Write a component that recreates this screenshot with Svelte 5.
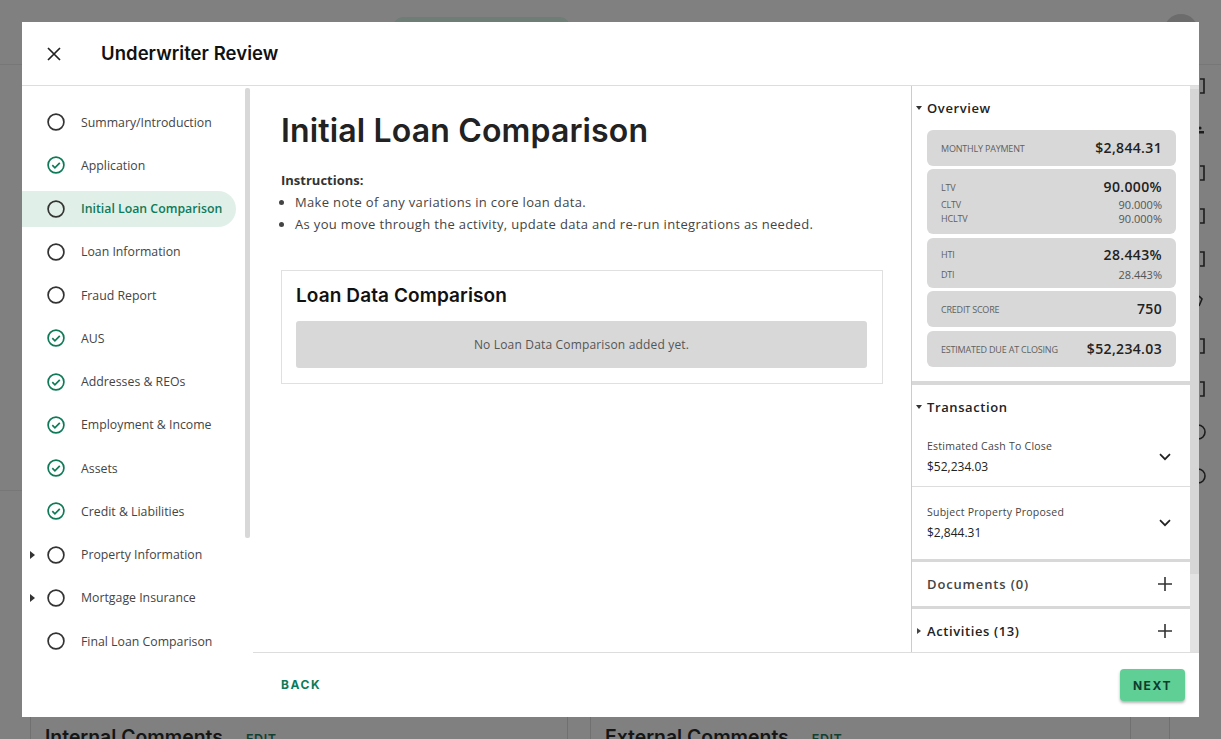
<script>
  const steps = [
    { name: 'Summary/Introduction' },
    { name: 'Application', done: true },
    { name: 'Initial Loan Comparison', active: true },
    { name: 'Loan Information' },
    { name: 'Fraud Report' },
    { name: 'AUS', done: true },
    { name: 'Addresses & REOs', done: true },
    { name: 'Employment & Income', done: true },
    { name: 'Assets', done: true },
    { name: 'Credit & Liabilities', done: true },
    { name: 'Property Information', expand: true },
    { name: 'Mortgage Insurance', expand: true },
    { name: 'Final Loan Comparison' }
  ];

  const rail = ['box', 'people', 'box', 'box', 'box', 'tag', 'box', 'box', 'round', 'round'];

  const costs = [
    { label: 'Estimated Cash To Close', value: '$52,234.03' },
    { label: 'Subject Property Proposed', value: '$2,844.31' }
  ];
</script>

<div class="page">
  <div class="topbar">
    <div class="pill"></div>
    <div class="avatar"></div>
  </div>
  <div class="under">
    <div class="under-main">
      <div class="upper"></div>
      <div class="comments">
        <div class="comment-card"><h3>Internal Comments</h3><span>EDIT</span></div>
        <div class="comment-card ext"><h3>External Comments</h3><span>EDIT</span></div>
        <div class="comment-side"></div>
      </div>
    </div>
    <div class="rail">
      {#each rail as r}
        <svg width="18" height="18" viewBox="0 0 18 18" fill="none" stroke="#1c1c1c" stroke-width="1.6">
          {#if r === 'round'}
            <circle cx="8" cy="9" r="7" />
          {:else if r === 'people'}
            <circle cx="10" cy="8" r="1.6" fill="#1c1c1c" stroke="none" />
            <rect x="8" y="11" width="6" height="2.5" fill="#1c1c1c" stroke="none" />
          {:else if r === 'tag'}
            <path d="M9 3l3 3-3 7" />
          {:else}
            <path d="M10 2h4v14h-4" />
          {/if}
        </svg>
      {/each}
    </div>
  </div>

  <div class="modal">
    <header class="head">
      <svg class="close" width="14" height="14" viewBox="0 0 14 14" fill="none" stroke="#222" stroke-width="1.7">
        <path d="M1 1l12 12M13 1L1 13" />
      </svg>
      <h1>Underwriter Review</h1>
    </header>

    <div class="body">
      <nav class="steps">
        <div class="step-list">
          {#each steps as s}
            <div class="step" class:active={s.active}>
              {#if s.expand}
                <svg class="caret" width="6" height="8" viewBox="0 0 6 8"><path d="M0 0l5 4-5 4z" fill="#333" /></svg>
              {/if}
              {#if s.done}
                <svg class="mark" width="18" height="18" viewBox="0 0 18 18" fill="none" stroke="#0f7a58" stroke-width="1.7">
                  <circle cx="9" cy="9" r="7.9" />
                  <path d="M5.3 9.2l2.6 2.6 4.9-5" />
                </svg>
              {:else}
                <svg class="mark" width="18" height="18" viewBox="0 0 18 18" fill="none" stroke="#333" stroke-width="1.7">
                  <circle cx="9" cy="9" r="7.9" />
                </svg>
              {/if}
              <span>{s.name}</span>
            </div>
          {/each}
        </div>
        <div class="nav-scroll"><div class="nav-thumb"></div></div>
      </nav>

      <div class="center">
        <div class="center-row">
          <main class="content">
            <h2>Initial Loan Comparison</h2>
            <p class="ins">Instructions:</p>
            <ul>
              <li>Make note of any variations in core loan data.</li>
              <li>As you move through the activity, update data and re-run integrations as needed.</li>
            </ul>
            <section class="card">
              <h3>Loan Data Comparison</h3>
              <div class="empty">No Loan Data Comparison added yet.</div>
            </section>
          </main>

          <aside class="side">
            <div class="side-inner">
              <section class="block overview">
                <div class="block-title">
                  <svg width="6" height="4" viewBox="0 0 6 4"><path d="M0 0h6L3 4z" fill="#333" /></svg>
                  Overview
                </div>
                <div class="stats">
                  <div class="stat">
                    <div class="line"><span class="k">MONTHLY PAYMENT</span><b>$2,844.31</b></div>
                  </div>
                  <div class="stat tall">
                    <div class="line"><span class="k">LTV</span><b>90.000%</b></div>
                    <div class="line sub gap"><span class="k">CLTV</span><span class="v">90.000%</span></div>
                    <div class="line sub"><span class="k">HCLTV</span><span class="v">90.000%</span></div>
                  </div>
                  <div class="stat mid">
                    <div class="line"><span class="k">HTI</span><b>28.443%</b></div>
                    <div class="line sub gap2"><span class="k">DTI</span><span class="v">28.443%</span></div>
                  </div>
                  <div class="stat">
                    <div class="line"><span class="k">CREDIT SCORE</span><b>750</b></div>
                  </div>
                  <div class="stat">
                    <div class="line"><span class="k">ESTIMATED DUE AT CLOSING</span><b>$52,234.03</b></div>
                  </div>
                </div>
              </section>

              <section class="block transaction">
                <div class="block-title">
                  <svg width="6" height="4" viewBox="0 0 6 4"><path d="M0 0h6L3 4z" fill="#333" /></svg>
                  Transaction
                </div>
                {#each costs as c}
                  <div class="cost">
                    <div>
                      <div class="cost-label">{c.label}</div>
                      <div class="cost-value">{c.value}</div>
                    </div>
                    <svg width="12" height="8" viewBox="0 0 12 8" fill="none" stroke="#222" stroke-width="1.7">
                      <path d="M1 1.2l5 5 5-5" />
                    </svg>
                  </div>
                {/each}
              </section>

              <section class="block fold">
                <span class="fold-name muted">Documents (0)</span>
                <svg class="plus" width="14" height="14" viewBox="0 0 14 14" stroke="#333" stroke-width="1.6"><path d="M7 0v14M0 7h14" /></svg>
              </section>

              <section class="block fold last">
                <svg class="fold-caret" width="4" height="6" viewBox="0 0 4 6"><path d="M0 0l4 3-4 3z" fill="#444" /></svg>
                <span class="fold-name">Activities (13)</span>
                <svg class="plus" width="14" height="14" viewBox="0 0 14 14" stroke="#333" stroke-width="1.6"><path d="M7 0v14M0 7h14" /></svg>
              </section>
            </div>
            <div class="side-scroll"><div class="side-thumb"></div></div>
          </aside>
        </div>

        <footer class="foot">
          <button class="back">BACK</button>
          <button class="next">NEXT</button>
        </footer>
      </div>
    </div>
  </div>
</div>

<style>
  :global(body) {
    margin: 0;
    font-family: 'Open Sans', 'Noto Sans', sans-serif;
  }

  .page {
    position: relative;
    width: 1221px;
    height: 739px;
    overflow: hidden;
    background: #808080;
    display: flex;
    flex-direction: column;
  }

  .topbar {
    height: 65px;
    flex: none;
    box-sizing: border-box;
    border-bottom: 1px solid #777;
    display: flex;
    align-items: flex-start;
    padding: 14px 23px 0 393px;
    justify-content: space-between;
  }

  .pill {
    width: 177px;
    height: 34px;
    margin-top: 3px;
    border-radius: 10px;
    background: #6f7d77;
  }

  .avatar {
    width: 34px;
    height: 34px;
    border-radius: 50%;
    background: #6c6c6c;
  }

  .under {
    flex: 1;
    display: flex;
    min-height: 0;
  }

  .under-main {
    flex: 1;
    display: flex;
    flex-direction: column;
  }

  .upper {
    height: 425px;
    flex: none;
    border-bottom: 1px solid #777;
  }

  .comments {
    flex: 1;
    display: flex;
    padding: 0 0 0 30px;
    gap: 22px;
  }

  .comment-card {
    width: 538px;
    box-sizing: border-box;
    border-left: 1px solid #707070;
    border-right: 1px solid #707070;
    padding: 234px 0 0 14px;
    display: flex;
    gap: 23px;
    align-items: baseline;
  }

  .comment-card.ext {
    width: 541px;
  }

  .comment-card h3 {
    margin: 0;
    font: 600 19.4px/24px Inter, sans-serif;
    color: #161616;
  }

  .comment-card span {
    font: 600 12.5px/20px Inter, sans-serif;
    letter-spacing: 0.6px;
    color: #123f30;
  }

  .comment-side {
    width: 38px;
    margin-left: -22px;
    border-right: 1px solid #707070;
  }

  .rail {
    width: 31px;
    flex: none;
    display: flex;
    flex-direction: column;
    gap: 25.3px;
    padding-top: 12px;
  }

  .modal {
    position: absolute;
    left: 22px;
    top: 22px;
    width: 1177px;
    height: 695px;
    background: #fff;
    display: flex;
    flex-direction: column;
  }

  .head {
    height: 64px;
    flex: none;
    box-sizing: border-box;
    border-bottom: 1px solid #ddd;
    display: flex;
    align-items: center;
    padding-left: 25px;
  }

  .close {
    margin-right: 40px;
  }

  h1 {
    margin: 0 0 1px;
    font: 600 18.5px/24px Inter, sans-serif;
    letter-spacing: 0.05px;
    color: #111;
  }

  .body {
    flex: 1;
    display: flex;
    min-height: 0;
  }

  .steps {
    width: 231px;
    flex: none;
    display: flex;
    padding-top: 2px;
  }

  .step-list {
    width: 214px;
    flex: none;
    padding-top: 16px;
  }

  .step {
    position: relative;
    height: 36px;
    margin-bottom: 7.26px;
    display: flex;
    align-items: center;
    padding-left: 25px;
    font-size: 12.3px;
    color: #444;
    border-radius: 0 18px 18px 0;
  }

  .step.active {
    background: #e0f0e8;
    color: #0f7a58;
    font-weight: 600;
  }

  .mark {
    flex: none;
    margin-right: 16px;
  }

  .caret {
    position: absolute;
    left: 8px;
    top: 14px;
  }

  .nav-scroll {
    margin-left: 9px;
    width: 5px;
  }

  .nav-thumb {
    height: 450px;
    background: #d8d8d8;
    border-radius: 2px;
  }

  .center {
    flex: 1;
    min-width: 0;
    display: flex;
    flex-direction: column;
  }

  .center-row {
    flex: 1;
    min-height: 0;
    display: flex;
  }

  .content {
    width: 658px;
    flex: none;
    box-sizing: border-box;
    padding: 25px 28px 0 28px;
    color: #222;
  }

  h2 {
    margin: 0;
    font: 600 32px/40px Inter, sans-serif;
    letter-spacing: 0.15px;
    color: #222;
  }

  .ins {
    margin: 19px 0 0;
    font-size: 13px;
    line-height: 20px;
    font-weight: 700;
    color: #333;
  }

  ul {
    margin: 2px 0 0;
    padding: 0 0 0 14px;
    font-size: 13px;
    line-height: 21.5px;
    letter-spacing: 0.33px;
    color: #444;
  }

  .card {
    margin-top: 35px;
    height: 114px;
    box-sizing: border-box;
    border: 1px solid #e0e0e0;
    padding: 12px 15px 12px 14px;
  }

  .card h3 {
    margin: 0;
    font: 600 19px/26px Inter, sans-serif;
    letter-spacing: 0.1px;
    color: #111;
  }

  .empty {
    margin-top: 12px;
    height: 47px;
    display: flex;
    align-items: center;
    justify-content: center;
    background: #d8d8d8;
    border-radius: 3px;
    font-size: 12px;
    letter-spacing: 0.17px;
    color: #555;
  }

  .side {
    flex: 1;
    min-width: 0;
    display: flex;
    border-left: 1px solid #ccc;
  }

  .side-inner {
    flex: 1;
    min-width: 0;
    overflow: hidden;
  }

  .block {
    border-bottom: 3px solid #d8d8d8;
  }

  .block-title {
    display: flex;
    align-items: center;
    gap: 5px;
    height: 20px;
    padding-left: 4px;
    font-size: 13px;
    font-weight: 600;
    letter-spacing: 0.6px;
    color: #222;
  }

  .overview {
    height: 299px;
    box-sizing: border-box;
    padding-top: 12px;
    border-bottom-width: 4px;
  }

  .stats {
    margin: 12px 14px 0 15px;
    display: flex;
    flex-direction: column;
    gap: 3px;
  }

  .stat {
    background: #d8d8d8;
    border-radius: 6px;
    padding: 0 14px;
    height: 36px;
    display: flex;
    flex-direction: column;
    justify-content: center;
  }

  .stat:nth-child(even) {
    margin-bottom: 1px;
  }

  .stat.tall {
    height: 65px;
  }

  .stat.mid {
    height: 50px;
  }

  .line {
    display: flex;
    justify-content: space-between;
    align-items: center;
  }

  .line.sub {
    line-height: 14px;
  }

  .gap {
    margin-top: 1px;
  }

  .gap2 {
    margin-top: 3px;
  }

  .k {
    font-size: 9px;
    letter-spacing: -0.2px;
    color: #606060;
  }

  .v {
    font-size: 11px;
    color: #555;
  }

  .line b {
    font-size: 14px;
    line-height: 20px;
    font-weight: 600;
    letter-spacing: 0.35px;
    color: #222;
  }

  .transaction {
    height: 177px;
    box-sizing: border-box;
    padding-top: 12px;
  }

  .transaction .block-title {
    margin-bottom: 8px;
  }

  .cost {
    height: 62px;
    box-sizing: border-box;
    display: flex;
    align-items: center;
    justify-content: space-between;
    padding: 2px 19px 0 15px;
    border-bottom: 1px solid #ddd;
  }

  .cost:last-child {
    height: 72px;
    padding-top: 0;
    border-bottom: 0;
  }

  .cost-label {
    font-size: 10.5px;
    line-height: 14px;
    letter-spacing: 0.25px;
    color: #444;
  }

  .cost-value {
    margin-top: 6px;
    font-size: 12px;
    line-height: 16px;
    color: #222;
  }

  .fold {
    height: 47px;
    box-sizing: border-box;
    display: flex;
    align-items: center;
    padding: 0 18px 0 15px;
    position: relative;
  }

  .fold.last {
    height: 44px;
    border-bottom: 0;
  }

  .fold-name {
    flex: 1;
    font-size: 13px;
    font-weight: 600;
    letter-spacing: 0.6px;
    color: #222;
  }

  .fold-name.muted {
    letter-spacing: 0.85px;
    color: #444;
  }

  .fold-caret {
    position: absolute;
    left: 5px;
    top: 19px;
  }

  .side-scroll {
    width: 9px;
    flex: none;
    background: #e2e2e2;
  }

  .side-thumb {
    height: 485px;
    margin-top: 3px;
    background: #d6d6d6;
  }

  .foot {
    height: 65px;
    flex: none;
    box-sizing: border-box;
    border-top: 1px solid #ddd;
    display: flex;
    align-items: center;
    justify-content: space-between;
    padding: 0 14px 0 28px;
  }

  button {
    border: 0;
    background: none;
    padding: 0;
    font-family: Inter, sans-serif;
    font-size: 12px;
    font-weight: 700;
    letter-spacing: 1.6px;
  }

  .back {
    margin-bottom: 2px;
    color: #0f7a58;
  }

  .next {
    width: 65px;
    height: 32px;
    border-radius: 4px;
    background: #5fcf96;
    color: #0d3d2b;
    box-shadow: 0 2px 3px rgba(0, 0, 0, 0.3);
  }
</style>
